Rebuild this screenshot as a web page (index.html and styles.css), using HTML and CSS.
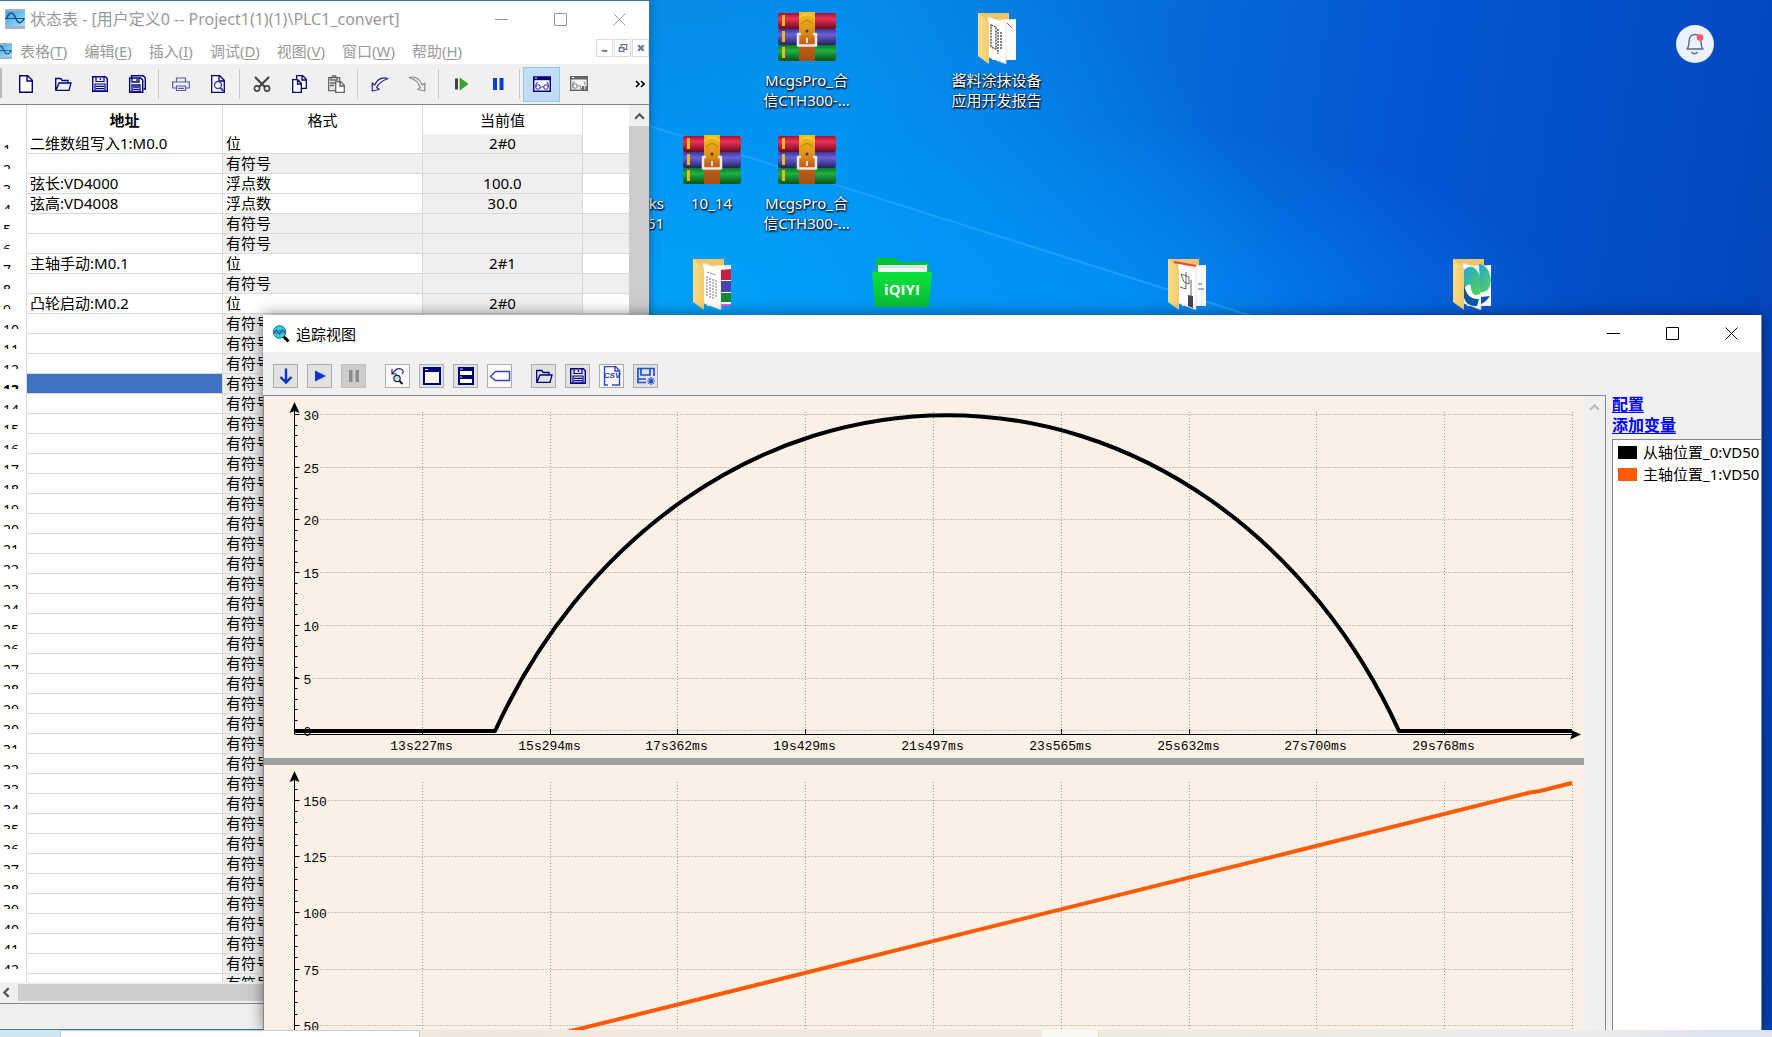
FILE: index.html
```html
<!DOCTYPE html>
<html lang="zh-CN">
<head>
<meta charset="utf-8">
<title>状态表 - 追踪视图</title>
<link rel="stylesheet" href="styles.css">
</head>
<body>
<svg class="defs" aria-hidden="true">
  <defs>
    <linearGradient id="red" x2="0" y2="1"><stop offset="0" stop-color="#a50f2c"/><stop offset=".35" stop-color="#e8345a"/><stop offset="1" stop-color="#6d0a1c"/></linearGradient>
    <linearGradient id="blue" x2="0" y2="1"><stop offset="0" stop-color="#3a3594"/><stop offset=".35" stop-color="#6a62d8"/><stop offset="1" stop-color="#27215f"/></linearGradient>
    <linearGradient id="green" x2="0" y2="1"><stop offset="0" stop-color="#0a7a26"/><stop offset=".35" stop-color="#1fb044"/><stop offset="1" stop-color="#07501a"/></linearGradient>
    <linearGradient id="belt" x2="0" y2="1"><stop offset="0" stop-color="#f2c01c"/><stop offset=".45" stop-color="#d98a1c"/><stop offset=".6" stop-color="#c4641a"/><stop offset="1" stop-color="#a34f12"/></linearGradient>
    <linearGradient id="flap" x2="1" y2="0"><stop offset="0" stop-color="#fbdc88"/><stop offset="1" stop-color="#f3cd70"/></linearGradient>
    <linearGradient id="iqy" x2="0" y2="1"><stop offset="0" stop-color="#08e43c"/><stop offset="1" stop-color="#08bc34"/></linearGradient>
    <linearGradient id="edge" x2="1" y2="1"><stop offset="0" stop-color="#1ea7e0"/><stop offset="1" stop-color="#5fd346"/></linearGradient>
    <linearGradient id="sky" x2="1" y2="1"><stop offset="0" stop-color="#3f9ee0"/><stop offset="1" stop-color="#9fe4fa"/></linearGradient>
  </defs>
  <symbol id="i-rar" viewBox="0 0 58 50">
    <rect x="0" y="1" width="58" height="16" rx="2" fill="url(#red)"/><rect x="0" y="17" width="58" height="16" rx="2" fill="url(#blue)"/><rect x="0" y="33" width="58" height="16" rx="2" fill="url(#green)"/>
    <path d="M5.500 3v11M5.500 19v11M5.500 35v11" stroke="#f1b81d" stroke-width="3"/>
    <rect x="21" y="0" width="16" height="49" fill="url(#belt)"/>
    <path d="M21 6q8-7 16 0" fill="none" stroke="#ffe04a"/><path d="M23 12q6-7 12 0" fill="none" stroke="#b9781a"/><circle cx="29" cy="19" r="1.500" fill="#5d2c06"/>
    <path d="M23 22h-3v11.500h18V22h-3" fill="none" stroke="#e8e8e8" stroke-width="2.500" stroke-linejoin="round"/><path d="M29 26v5" stroke="#fff" stroke-width="1.500"/>
  </symbol>
  <symbol id="i-folder" viewBox="0 0 40 52">
    <path d="M1 1h31v10H1z" fill="#eec465"/><path d="M15 8l24-1v41H15z" fill="#fbfbfb"/><path d="M11 5l18 6v41l-18-7z" fill="#fff" stroke="#d8d8d8" stroke-width=".6"/><path d="M1 1l11 9v42L1 44z" fill="url(#flap)"/>
  </symbol>
  <symbol id="i-app" viewBox="0 0 20 20">
    <rect x="0" y="0" width="20" height="20" fill="#aab4c6"/><rect x="1" y="2" width="19" height="15" fill="url(#sky)"/><path d="M0 9.500h20" stroke="#23518f"/><path d="M1 10c4-8 7-8 10 0 2 5 5 5 8 0" fill="none" stroke="#164a8a" stroke-width="1.300"/>
  </symbol>
  <symbol id="i-folder-open" viewBox="0 0 18 18">
    <path d="M1.700 15V3.500h5l1.500 2H14V8M2 15.300L5 8h12l-2 7.300z" fill="none" stroke="currentColor" stroke-width="1.300"/>
  </symbol>
  <symbol id="i-save" viewBox="0 0 18 18">
    <path d="M1.700 1.700h12.600l2 2v12.600H1.700z" fill="none" stroke="currentColor" stroke-width="1.400"/><path d="M5 2v4.500h8V2M9.500 3v2M4 9h10v7H4zM5 11.300h8M5 13.700h8" fill="none" stroke="currentColor" stroke-width="1.200"/>
  </symbol>
</svg>

<main class="desktop">
  <svg class="light" viewBox="0 0 1772 1037" preserveAspectRatio="none" aria-hidden="true">
    <path d="M640 123L1255 317 640 317z" fill="#0aa0ff" opacity=".18"/><path d="M640 123L1255 317" stroke="#2aa8ff" stroke-width="2" opacity=".7"/>
  </svg>

  <ul class="shortcuts">
    <li class="c3 r1"><svg class="rar"><use href="#i-rar"/></svg><span>McgsPro_合<br>信CTH300-...</span></li>
    <li class="c5 r1"><svg class="folder" viewBox="0 0 40 52"><use href="#i-folder"/><path d="M14 13l5 2v22l-5-2zM21 17v25M24 20v18" fill="none" stroke="#555" stroke-width="1.500" stroke-dasharray="2 1"/><path d="M30 11l5 5" stroke="#e55"/></svg><span>酱料涂抹设备<br>应用开发报告</span></li>
    <li class="c1 r2 tail"><span>ks<br>61</span></li>
    <li class="c2 r2"><svg class="rar"><use href="#i-rar"/></svg><span>10_14</span></li>
    <li class="c3 r2"><svg class="rar"><use href="#i-rar"/></svg><span>McgsPro_合<br>信CTH300-...</span></li>
    <li class="c2 r3"><svg class="folder" viewBox="0 0 40 52"><use href="#i-folder"/><path d="M29 12l10-1v11H29z" fill="#c81f43"/><path d="M29 23h10v11H29z" fill="#4a43b0"/><path d="M29 35h10v9H29z" fill="#118a31"/><path d="M29 46h10v2H29z" fill="#e05bd8"/><path d="M15 14l9 3M15 18v20M18 20v21M21 21v20M24 22v18" stroke="#777" stroke-dasharray="2 1"/></svg></li>
    <li class="c4 r3"><svg class="iqiyi" viewBox="0 0 60 52"><path d="M4 3q0-2 2-2h17l4 4h26q4 0 4 4v14H4z" fill="#06c233"/><path d="M6 8h49v10H6z" fill="#eef5f5"/><path d="M8 10h45" stroke="#bcd3d6"/><path d="M0 15h60l-3 33q0 2-3 2H6q-3 0-3-2z" fill="url(#iqy)"/><text x="30" y="38" text-anchor="middle">iQIYI</text></svg></li>
    <li class="c7 r3"><svg class="folder" viewBox="0 0 40 52"><use href="#i-folder"/><path d="M7 4l22 4" stroke="#e44" stroke-width="2"/><path d="M13 29l6 2V14M14 16l8 3v7l-5-2zM24 22v24M31 26h4M31 31h6" fill="none" stroke="#444" stroke-width=".8"/><path d="M21 37l5 1v12l-5-2z" fill="#445"/></svg></li>
    <li class="c10 r3"><svg class="folder" viewBox="0 0 40 52"><use href="#i-folder"/><path d="M12 12q9-8 15 4 3 9 1 20-8 4-9-6 0-7-7 0z" fill="url(#edge)"/><path d="M27 6q10 1 12 16-1 14-11 12z" fill="url(#edge)"/><path d="M12 25q2 17 15 16l-2 7q-10 1-13-8zM29 39l9-1q-3 5-9 8z" fill="#0d57a6"/></svg></li>
  </ul>

  <button class="bell" aria-label="通知"><svg viewBox="0 0 38 38"><path d="M11 24c3-3 1-11 4-13 2-2 6-2 8 0 3 2 1 10 4 13zM15.500 27q3 3.500 6 0" fill="none" stroke="#566887" stroke-width="1.400" stroke-linejoin="round"/><circle cx="24" cy="12.500" r="3.300" fill="#ff5a5f"/></svg></button>

  <section class="window status-window">
    <header class="titlebar">
      <svg class="app-icon"><use href="#i-app"/></svg>
      <h1>状态表 - [用户定义0 -- Project1(1)(1)\PLC1_convert]</h1>
      <div class="controls">
        <button aria-label="最小化"><svg viewBox="0 0 13 13"><path d="M0 6.500h13"/></svg></button>
        <button aria-label="最大化"><svg viewBox="0 0 13 13"><path d="M.5.500h12v12H.5z"/></svg></button>
        <button aria-label="关闭"><svg viewBox="0 0 13 13"><path d="M.5.500l12 12M12.500.500l-12 12"/></svg></button>
      </div>
    </header>
    <nav class="menubar">
      <svg class="doc-icon" viewBox="6 0 14 20" preserveAspectRatio="none"><use href="#i-app" width="20" height="20"/></svg>
      <button>表格(<u>T</u>)</button><button>编辑(<u>E</u>)</button><button>插入(<u>I</u>)</button><button>调试(<u>D</u>)</button><button>视图(<u>V</u>)</button><button>窗口(<u>W</u>)</button><button>帮助(<u>H</u>)</button>
      <div class="mdi">
        <button aria-label="最小化子窗口"><svg viewBox="0 0 16 16"><path d="M5 11h6" stroke-width="2"/></svg></button>
        <button aria-label="还原子窗口"><svg viewBox="0 0 16 16"><path d="M6.500 7V4.500h6v5H10M4.500 7.500h5v4h-5zM6 4.500h6.500M4 8h6" stroke-width="1.300"/></svg></button>
        <button aria-label="关闭子窗口"><svg viewBox="0 0 16 16"><path d="M5.500 5l6 6M11.500 5l-6 6" stroke-width="2.200"/></svg></button>
      </div>
    </nav>
    <div class="toolbar">
      <button aria-label="新建"><svg viewBox="0 0 18 18"><path d="M2.700.700h8l4.600 4.600v12H2.700zM10 1v5h5" fill="#fff" stroke="#000080" stroke-width="1.400"/></svg></button>
      <button aria-label="打开"><svg><use href="#i-folder-open"/></svg></button>
      <button aria-label="保存"><svg><use href="#i-save"/></svg></button>
      <button aria-label="全部保存"><svg viewBox="0 0 18 18"><path d="M3.500 3V.700h11.800l2 2V14H15.500" fill="none" stroke="#000080" stroke-width="1.400"/><path d="M1.700 3h11l2 2v12.300h-13z" fill="#fff" stroke="#000080" stroke-width="1.500"/><path d="M4 3v4h7V3M9 4v2M4 10h8v7H4zM5 12h6M5 14.500h6" fill="none" stroke="#000080" stroke-width="1.300"/></svg></button>
      <i></i>
      <button aria-label="打印"><svg viewBox="0 0 18 18"><path d="M4.500 7V3h9v4M4 13H.7V7h16.600v6H14M4.500 11h9v4.500h-9zM6 13.300h6" fill="none" stroke="#5a5aa8" stroke-width="1.200"/></svg></button>
      <button aria-label="打印预览"><svg viewBox="0 0 18 18"><path d="M2.700.700h8l4.600 4.600v12H2.700zM10 1v5h5" fill="#fff" stroke="#000080" stroke-width="1.300"/><circle cx="9" cy="10" r="3.500" fill="#eaf6ff" stroke="#3a3aa8" stroke-width="1.300"/><path d="M11.500 13l3 3" stroke="#3a3aa8" stroke-width="1.800"/></svg></button>
      <i></i>
      <button aria-label="剪切"><svg viewBox="0 0 18 18" fill="none" stroke="#444" stroke-width="2.200"><path d="M2 2l10 10M16 2L6 12"/><circle cx="4" cy="13.500" r="2.600" stroke-width="1.600"/><circle cx="14" cy="13.500" r="2.600" stroke-width="1.600"/></svg></button>
      <button aria-label="复制"><svg viewBox="0 0 18 18" fill="#fff" stroke="#000080" stroke-width="1.300"><path d="M6.700.700h6l3.600 3.600v9H6.700zM12 1v4h4"/><path d="M2.700 4.700h5l3.600 3.600v9H2.700zM7.500 5v4h4"/></svg></button>
      <button aria-label="粘贴"><svg viewBox="0 0 18 18" fill="#e6e6e6" stroke="#666" stroke-width="1.300"><path d="M1.700 2.700h11v13h-11zM4 5h6V2.500H8.500V1h-3v1.500H4zM3 8h6M3 10.500h4"/><path d="M8.700 6.700h5l3.600 3.600v7H8.700zM13 7v4h4" fill="#fff"/></svg></button>
      <i></i>
      <button aria-label="撤销"><svg viewBox="0 0 18 18"><path d="M1.200 8v8l7-1.500-2.500-2Q8 7 17 3.500 8 1 3.700 10z" fill="none" stroke="#23239c" stroke-width="1.200" stroke-linejoin="round"/></svg></button>
      <button aria-label="重做"><svg viewBox="0 0 18 18"><path d="M16.800 8v8l-7-1.500 2.500-2Q10 5 1 2.500 10 0 14.300 10z" fill="none" stroke="#8a8a8a" stroke-width="1.200" stroke-linejoin="round"/></svg></button>
      <i></i>
      <button aria-label="运行"><svg viewBox="0 0 18 18"><path d="M3 3.500h3v11H3z" fill="#444"/><path d="M8 3l8 6-8 6z" fill="#35a828" stroke="#187818" stroke-width=".5"/></svg></button>
      <button aria-label="暂停"><svg viewBox="0 0 18 18"><path d="M4 3h4v12H4zM10.500 3h4v12h-4z" fill="#0c3cd0"/></svg></button>
      <i></i>
      <button aria-label="监控" aria-pressed="true" class="on"><svg viewBox="0 0 18 18"><path d="M.7 2.200h16.600v14.100H.7z" fill="#fff" stroke="#000080" stroke-width="1.500"/><path d="M0 1.500h18v3.700H0z" fill="#000080"/><path d="M2 3h2" stroke="#fff"/><g fill="none" stroke="#4444b8" stroke-width="1.100"><circle cx="5" cy="12" r="2.200"/><circle cx="13" cy="12" r="2.200"/><path d="M2.800 12Q2.500 8 5 7.200M7.300 12h3.400M15.200 12q.4-3.500-1.500-5"/></g></svg></button>
      <button aria-label="暂停监控"><svg viewBox="0 0 18 18"><path d="M.7 2.200h16.600v13.100H.7z" fill="#f7f7f7" stroke="#666" stroke-width="1.400"/><path d="M0 1h18v3.500H0z" fill="#666"/><path d="M2 2.500h2" stroke="#fff"/><g fill="none" stroke="#888" stroke-width="1.100"><circle cx="5" cy="11" r="2.200"/><path d="M2.800 11Q2.500 7 5 6.300M7.300 11h4M15 10q.2-2-1-3.500M10.500 11v2.500h2"/></g><path d="M12 11h2.300v5H12zM15.300 11h2.300v5h-2.300z" fill="#666"/></svg></button>
      <button class="more" aria-label="更多"><svg viewBox="0 0 10 8"><path d="M1 1l3 3-3 3M6 1l3 3-3 3" fill="none" stroke="#000" stroke-width="1.600"/></svg></button>
    </div>
    <div class="sheet">
      <div class="sheet-body">
        <table>
          <colgroup><col class="w-no"><col class="w-addr"><col class="w-fmt"><col class="w-val"><col></colgroup>
          <thead><tr><th></th><th>地址</th><th>格式</th><th>当前值</th><th></th></tr></thead>
          <tbody id="rows"></tbody>
        </table>
      </div>
      <div class="vscroll"><svg viewBox="0 0 10 6"><path d="M1 5l4-4 4 4"/></svg><div class="thumb"></div></div>
    </div>
    <div class="hscroll"><svg viewBox="0 0 6 10"><path d="M5 1L1 5l4 4"/></svg><div class="thumb"></div></div>
    <footer class="statusbar"></footer>
  </section>

  <section class="window trace-window">
    <header class="titlebar">
      <svg class="trace-icon" viewBox="0 0 18 18"><path d="M10.500 10.500l6 6" stroke="#000" stroke-width="3"/><circle cx="7.500" cy="7" r="6.300" fill="#20d8e0" stroke="#346b72" stroke-width="1"/><path d="M2 8l2.500-3 3 4 3-4 2.500 3" fill="none" stroke="#244a9a" stroke-width="1.200"/><path d="M2 6.500l3 2.500 3-4 3 4" fill="none" stroke="#a33a66" stroke-width=".9"/></svg>
      <h2>追踪视图</h2>
      <div class="controls">
        <button aria-label="最小化"><svg viewBox="0 0 13 13"><path d="M0 6.500h13"/></svg></button>
        <button aria-label="最大化"><svg viewBox="0 0 13 13"><path d="M.5.500h12v12H.5z"/></svg></button>
        <button aria-label="关闭"><svg viewBox="0 0 13 13"><path d="M.5.500l12 12M12.500.500l-12 12"/></svg></button>
      </div>
    </header>
    <div class="trace-tools">
      <div><button aria-label="下载"><svg viewBox="0 0 18 18"><path d="M9 1.500v14M3.500 10L9 15.500 14.500 10" fill="none" stroke="#0c34cc" stroke-width="2.400"/></svg></button>
      <button aria-label="开始"><svg viewBox="0 0 18 18"><path d="M4 3.500L15 9 4 14.500z" fill="#0c34cc"/></svg></button>
      <button aria-label="暂停" disabled><svg viewBox="0 0 18 18"><path d="M4 3h3.500v12H4zM10.500 3H14v12h-3.500z" fill="#8c8c8c"/></svg></button></div>
      <div><button aria-label="还原缩放" class="light-bg"><svg viewBox="0 0 18 18"><path d="M3 2v5h5M3.500 6.500Q8 0 12 2t1 5" fill="none" stroke="#23238c" stroke-width="1.200"/><circle cx="8" cy="11.500" r="3.200" fill="#bfeaff" stroke="#222" stroke-width="1.200"/><path d="M10.500 14l3 3" stroke="#111" stroke-width="1.800"/></svg></button>
      <button aria-label="单窗格"><svg viewBox="0 0 18 18"><path d="M0 0h18v18H0z" fill="#000080"/><path d="M2 5h14v11H2z" fill="#fff"/><path d="M2 2.500h3" stroke="#fff"/></svg></button>
      <button aria-label="双窗格"><svg viewBox="0 0 18 18"><path d="M1 0h16v18H1z" fill="#000080"/><path d="M3 4h12v4H3zM3 12h12v4H3z" fill="#fff"/><path d="M3 2h3M3 10h2" stroke="#ccf"/></svg></button>
      <button aria-label="标签" class="light-bg"><svg class="wide" viewBox="0 0 22 18"><path d="M20.500 4.500H6.500l-5 5 5 4h14z" fill="#fff" stroke="#3a44c4" stroke-width="1.400"/></svg></button></div>
      <div><button aria-label="打开"><svg><use href="#i-folder-open"/></svg></button>
      <button aria-label="保存"><svg><use href="#i-save"/></svg></button>
      <button aria-label="导出 CSV" class="light-bg"><svg class="csv" viewBox="0 0 20 20"><path d="M2.500 12V.5h11l4 4V19H10M13 .500V5h4.500M17.500 14v3M2.500 12v7H6M2.500 15v2" fill="none" stroke="#2b49d6" stroke-width="1.400"/><text x="10" y="12" text-anchor="middle">CSV</text></svg></button>
      <button aria-label="另存为"><svg viewBox="0 0 18 18"><path d="M9 15.500H1V1.500h16V9M4 2v6h9V2M1 12h8" fill="none" stroke="#1f4fd0" stroke-width="1.700"/><path d="M14 10v8M10 14h8M11.300 11.300l5.400 5.400M16.700 11.300l-5.400 5.400" stroke="#1f4fd0" stroke-width="1.200"/></svg></button></div>
    </div>
    <div class="trace-body">
      <div class="charts">
        <svg class="chart" id="slave" viewBox="264 396 1320 362" role="img" aria-label="从轴位置曲线"></svg>
        <div class="splitter"></div>
        <svg class="chart" id="master" viewBox="264 765 1320 265" role="img" aria-label="主轴位置曲线"></svg>
      </div>
      <div class="vscroll"><svg viewBox="0 0 10 6"><path d="M1 5l4-4 4 4"/></svg></div>
      <aside>
        <a href="#">配置</a>
        <a href="#">添加变量</a>
        <ul class="legend">
          <li><b class="black"></b>从轴位置_0:VD5000</li>
          <li><b class="orange"></b>主轴位置_1:VD5008</li>
        </ul>
      </aside>
    </div>
  </section>

  <footer class="taskbar"><span class="start"></span><span class="search"></span><span class="tasks"></span><span class="current"></span><span class="tray"></span></footer>
</main>
<script src="app.js"></script>
</body>
</html>
```
FILE: styles.css
```css
* { box-sizing: border-box; }
body {
  margin: 0;
  font: 15px/20px "Noto Sans", "Noto Sans CJK SC", sans-serif;
  color: #000;
}
button {
  margin: 0;
  padding: 0;
  border: 0;
  background: none;
  font: inherit;
  color: inherit;
}
ul { list-style: none; margin: 0; padding: 0; }
svg { display: block; }
.defs { position: absolute; width: 0; height: 0; }

.desktop {
  position: relative;
  height: 100vh;
  overflow: hidden;
  background:
    radial-gradient(ellipse 620px 420px at 38% 30%, #00a2f8 0%, rgba(0, 152, 248, .7) 45%, rgba(0, 140, 248, 0) 100%),
    radial-gradient(ellipse 480px 220px at 62% 33%, rgba(0, 148, 255, .75), rgba(0, 140, 255, 0)),
    linear-gradient(98deg, #0a84dc 30%, #0688e6 45%, #0570dc 58%, #0455d2 75%, #0342b8 100%);
}
.light { position: absolute; inset: 0; width: 100%; height: 100%; }

.shortcuts {
  position: absolute;
  left: 569px;
  top: 11px;
  display: grid;
  grid-template-columns: repeat(10, 95px);
  grid-template-rows: repeat(3, 123px);
}
.shortcuts li {
  display: flex;
  flex-direction: column;
  align-items: center;
  gap: 7px;
  color: #fff;
  text-align: center;
  white-space: nowrap;
  text-shadow: 1px 1px 2px #000, 0 1px 2px #002;
}
.r1 { grid-row: 1; } .r2 { grid-row: 2; } .r3 { grid-row: 3; }
.c1 { grid-column: 1; } .c2 { grid-column: 2; } .c3 { grid-column: 3; } .c4 { grid-column: 4; }
.c5 { grid-column: 5; } .c7 { grid-column: 7; } .c10 { grid-column: 10; }
.shortcuts .tail { align-items: flex-end; text-align: right; padding-top: 59px; }
.rar { width: 58px; height: 52px; }
.folder { width: 40px; height: 54px; }
.iqiyi { width: 60px; height: 52px; }
.iqiyi text { font: bold 15px "Open Sans", sans-serif; fill: #fff; text-shadow: none; }
.folder + span { margin-top: -2px; }

.bell {
  position: absolute;
  right: 58px;
  top: 25px;
  width: 38px;
  height: 38px;
  border-radius: 50%;
  background: #ecf2ff;
}

.window { position: absolute; display: flex; flex-direction: column; background: #f0f0f0; }
.titlebar { display: flex; align-items: center; flex: none; background: #fff; }
.titlebar h1, .titlebar h2 { margin: 0; flex: 1; font-size: 15px; line-height: 20px; font-weight: 400; white-space: nowrap; }
.titlebar h1 { font-size: 16px; }
.controls { display: flex; }
.controls button { width: 59px; height: 36px; display: grid; place-items: center; }
.controls svg { width: 13px; height: 13px; fill: none; stroke: currentColor; }

.status-window {
  left: 0;
  top: 0;
  bottom: 7px;
  width: 650px;
  border: solid #2f78a8;
  border-width: 1px 1px 1px 0;
  box-shadow: 0 0 8px rgba(0, 0, 0, .35);
}
.status-window .titlebar { height: 36px; padding-left: 5px; gap: 5px; color: #999; }
.status-window .controls button { height: 32px; }
.app-icon { width: 20px; height: 20px; }
.menubar { display: flex; align-items: center; flex: none; gap: 17px; height: 27px; background: #fff; color: #999; }
.doc-icon { width: 12px; height: 16px; margin-right: -9px; }
.menubar u { text-underline-offset: 2px; }
.mdi { display: flex; gap: 1px; margin: 0 0 6px auto; }
.mdi button { width: 17px; height: 18px; border: 1px solid #ddd; }
.mdi svg { width: 15px; height: 16px; fill: none; stroke: #66778c; }

.toolbar { display: flex; align-items: center; flex: none; height: 41px; padding-left: 7px; border-bottom: 1px solid #808388; background: linear-gradient(90deg, #bbb 2px, transparent 2px) 0 4px / 100% 30px no-repeat, #f0f0f0; color: #000080; }
.toolbar button { display: grid; place-items: center; width: 37px; height: 35px; }
.toolbar svg { width: 18px; height: 18px; }
.toolbar i { width: 1px; height: 30px; margin: 0 3px; background: #c8c8c8; }
.toolbar .on { background: #c2dcf3; border: 1px solid #90c8f6; }
.toolbar .more { margin-left: auto; width: 18px; }
.toolbar .more svg { width: 10px; height: 8px; }

.sheet { display: flex; flex: 1; min-height: 0; background: #fff; }
.sheet-body { flex: 1; overflow: hidden; }
table { width: 100%; table-layout: fixed; border-collapse: separate; border-spacing: 0; }
.w-no { width: 27px; } .w-addr { width: 196px; } .w-fmt { width: 200px; } .w-val { width: 160px; }
th, td { padding: 0; border-right: 1px solid #d9d9d9; white-space: nowrap; overflow: hidden; }
th:last-child, td:last-child { border-right: 0; }
thead th { height: 29px; font-weight: 400; }
thead th:nth-child(2) { font-weight: 700; }
tbody td { height: 20px; padding: 0 3px; line-height: 19px; border-bottom: 1px solid #d9d9d9; }
tbody th { font-weight: 400; text-align: left; vertical-align: top; }
tbody th span { display: block; height: 15px; padding: 8px 0 0 3px; font-size: 14px; line-height: 16px; overflow: hidden; }
td.val { text-align: center; background: #efefef; }
.empty td:nth-child(n+3) { background: #efefef; }
.selected th { font-weight: 700; }
.selected td:nth-child(2) { background: #4072c4; }

.vscroll { display: flex; flex-direction: column; align-items: center; width: 20px; flex: none; background: #f0f0f0; }
.vscroll svg { width: 11px; height: 7px; margin: 8px 0 6px; }
.vscroll path, .hscroll path { fill: none; stroke: #555; stroke-width: 2; }
.thumb { flex: 1; align-self: stretch; background: #cdcdcd; }
.hscroll { display: flex; align-items: center; flex: none; height: 22px; padding: 2px 0; border-bottom: 1px solid #82878f; background: #f0f0f0; }
.hscroll svg { width: 7px; height: 11px; margin: 0 8px 0 3px; }
.statusbar { flex: none; height: 25px; }

.trace-window {
  left: 263px;
  right: 10px;
  top: 315px;
  bottom: 7px;
  border-right: 1px solid #888;
  box-shadow: 0 0 14px rgba(0, 0, 0, .5);
}
.trace-window .titlebar { height: 37px; padding-left: 9px; gap: 6px; }
.trace-icon { width: 18px; height: 18px; }
.trace-tools { display: flex; align-items: center; flex: none; height: 43px; padding: 4px 0 0 10px; gap: 19px; color: #000080; }
.trace-tools div { display: flex; gap: 9px; }
.trace-tools button { display: grid; place-items: center; width: 25px; height: 24px; border: 1px solid #adadad; background: #e1e1e1; }
.trace-tools button:disabled { background: #ccc; border-color: #bfbfbf; }
.trace-tools .light-bg { background: #fafafa; }
.trace-tools svg { width: 18px; height: 18px; }
.trace-tools .wide { width: 22px; }
.trace-tools .csv { width: 20px; height: 20px; }
.csv text { font: bold italic 8px "Liberation Sans", sans-serif; fill: #1c34c4; }
.trace-body { display: flex; flex: 1; min-height: 0; }
.charts { flex: 1; min-width: 0; overflow: hidden; border: solid #82878f; border-width: 1px 0 0 1px; background: #faf0e6; }
.chart { width: 100%; height: auto; }
.chart text { font: 13px "Liberation Mono", monospace; }
.chart .grid { stroke: #999; stroke-dasharray: 1 2; }
.chart .axis { stroke: #000; }
.splitter { height: 7px; background: #a0a0a0; }
.trace-body .vscroll { width: 22px; border: solid #82878f; border-width: 1px 1px 0 0; }
.trace-body .vscroll path { stroke: #bbb; }
aside { display: flex; flex-direction: column; gap: 5px; width: 155px; flex: none; padding-left: 6px; }
aside a { align-self: flex-start; font: bold 16px/16px "Noto Sans CJK SC", sans-serif; color: #00f; text-underline-offset: 2px; }
.legend { flex: 1; margin-top: 2px; border: solid #82878f; border-width: 1px 0 0 1px; background: #fff; padding: 1px 2px 0 5px; overflow: hidden; }
.legend li { display: flex; align-items: center; gap: 6px; height: 22px; white-space: nowrap; overflow: hidden; }
.legend b { width: 19px; height: 13px; flex: none; }
.black { background: #000; }
.orange { background: #ff5a00; }

.taskbar { position: absolute; left: 0; right: 0; bottom: 0; display: flex; height: 7px; background: linear-gradient(90deg, #f3e6dc 25%, #efeae2 60%, #ececec 90%, #dce3f3 97%); }
.start { width: 60px; background: #cfe6f0; }
.search { width: 360px; border: solid #ccc; border-width: 1px 1px 0; background: #fff; }
.tasks { width: 622px; }
.current { width: 57px; border-right: 1px solid #ddd; background: #f9f7f4; }
```
FILE: app.js
```js
// Variables watched in the status table, keyed by row number
const watched = {
  1: ["二维数组写入1:M0.0", "位", "2#0"],
  3: ["弦长:VD4000", "浮点数", "100.0"],
  4: ["弦高:VD4008", "浮点数", "30.0"],
  7: ["主轴手动:M0.1", "位", "2#1"],
  9: ["凸轮启动:M0.2", "位", "2#0"]
};
let rows = "";
for (let n = 1; n <= 43; n++) {
  const [addr, fmt, val] = watched[n] || ["", "有符号", ""];
  const cls = (watched[n] ? "" : "empty") + (n === 13 ? " selected" : "");
  rows += `<tr class="${cls}"><th><span>${n}</span></th><td>${addr}</td><td>${fmt}</td><td class="val">${val}</td><td></td></tr>`;
}
document.getElementById("rows").innerHTML = rows;

const left = 294.5, right = 1572.5, step = 127.8;
const times = ["13s227ms", "15s294ms", "17s362ms", "19s429ms", "21s497ms", "23s565ms", "25s632ms", "27s700ms", "29s768ms"];
const line = (cls, x1, y1, x2, y2) => `<path class="${cls}" d="M${x1} ${y1}L${x2} ${y2}"/>`;

function frame(top, bottom, labels, firstY, gap, arrowY) {
  let s = "";
  for (let i = 1; i <= 10; i++) {
    const x = Math.floor(left + i * step) + 0.5;
    s += line("grid", x, top, x, bottom);
  }
  labels.forEach((label, i) => {
    const y = Math.floor(firstY + i * gap) + 0.5;
    s += line("grid", left + 6 + String(label).length * 8 + 4, y, right, y) + line("axis", left, y, left + 5, y);
    s += `<text x="${left + 9}" y="${y + 5}">${label}</text>`;
  });
  for (let y = firstY - gap / 5; y > arrowY + 10; y -= gap / 5) s += line("axis", left, Math.floor(y) + 0.5, left + 3, Math.floor(y) + 0.5);
  for (let y = firstY; y < bottom; y += gap / 5) s += line("axis", left, Math.floor(y) + 0.5, left + 3, Math.floor(y) + 0.5);
  s += line("axis", left, arrowY + 6, left, bottom);
  s += `<path d="M${left} ${arrowY}l5 11-5-2-5 2z"/>`;
  return s;
}

let slave = frame(412, 734, [30, 25, 20, 15, 10, 5, 0], 414.5, 52.7, 402);
slave += line("axis", left, 734.5, 1575, 734.5) + '<path d="M1581 734.500l-11-5 2 5-2 5z"/>';
times.forEach((t, i) => {
  const x = Math.floor(left + (i + 1) * step) + 0.5;
  slave += line("axis", x, 729, x, 734) + `<text x="${x - 1}" y="750" text-anchor="middle">${t}</text>`;
});
slave += '<path d="M294 731H495A512.300 596.700 0 0 1 1399 731H1572" fill="none" stroke="#000" stroke-width="4" stroke-linejoin="round"/>';
document.getElementById("slave").innerHTML = slave;

let master = frame(782, 1030, [150, 125, 100, 75, 50], 800.5, 56.2, 771);
master += '<path d="M567 1032L1300 850 1530 792.500 1540 791 1572 783" fill="none" stroke="#ff5a00" stroke-width="4"/>';
document.getElementById("master").innerHTML = master;
```
